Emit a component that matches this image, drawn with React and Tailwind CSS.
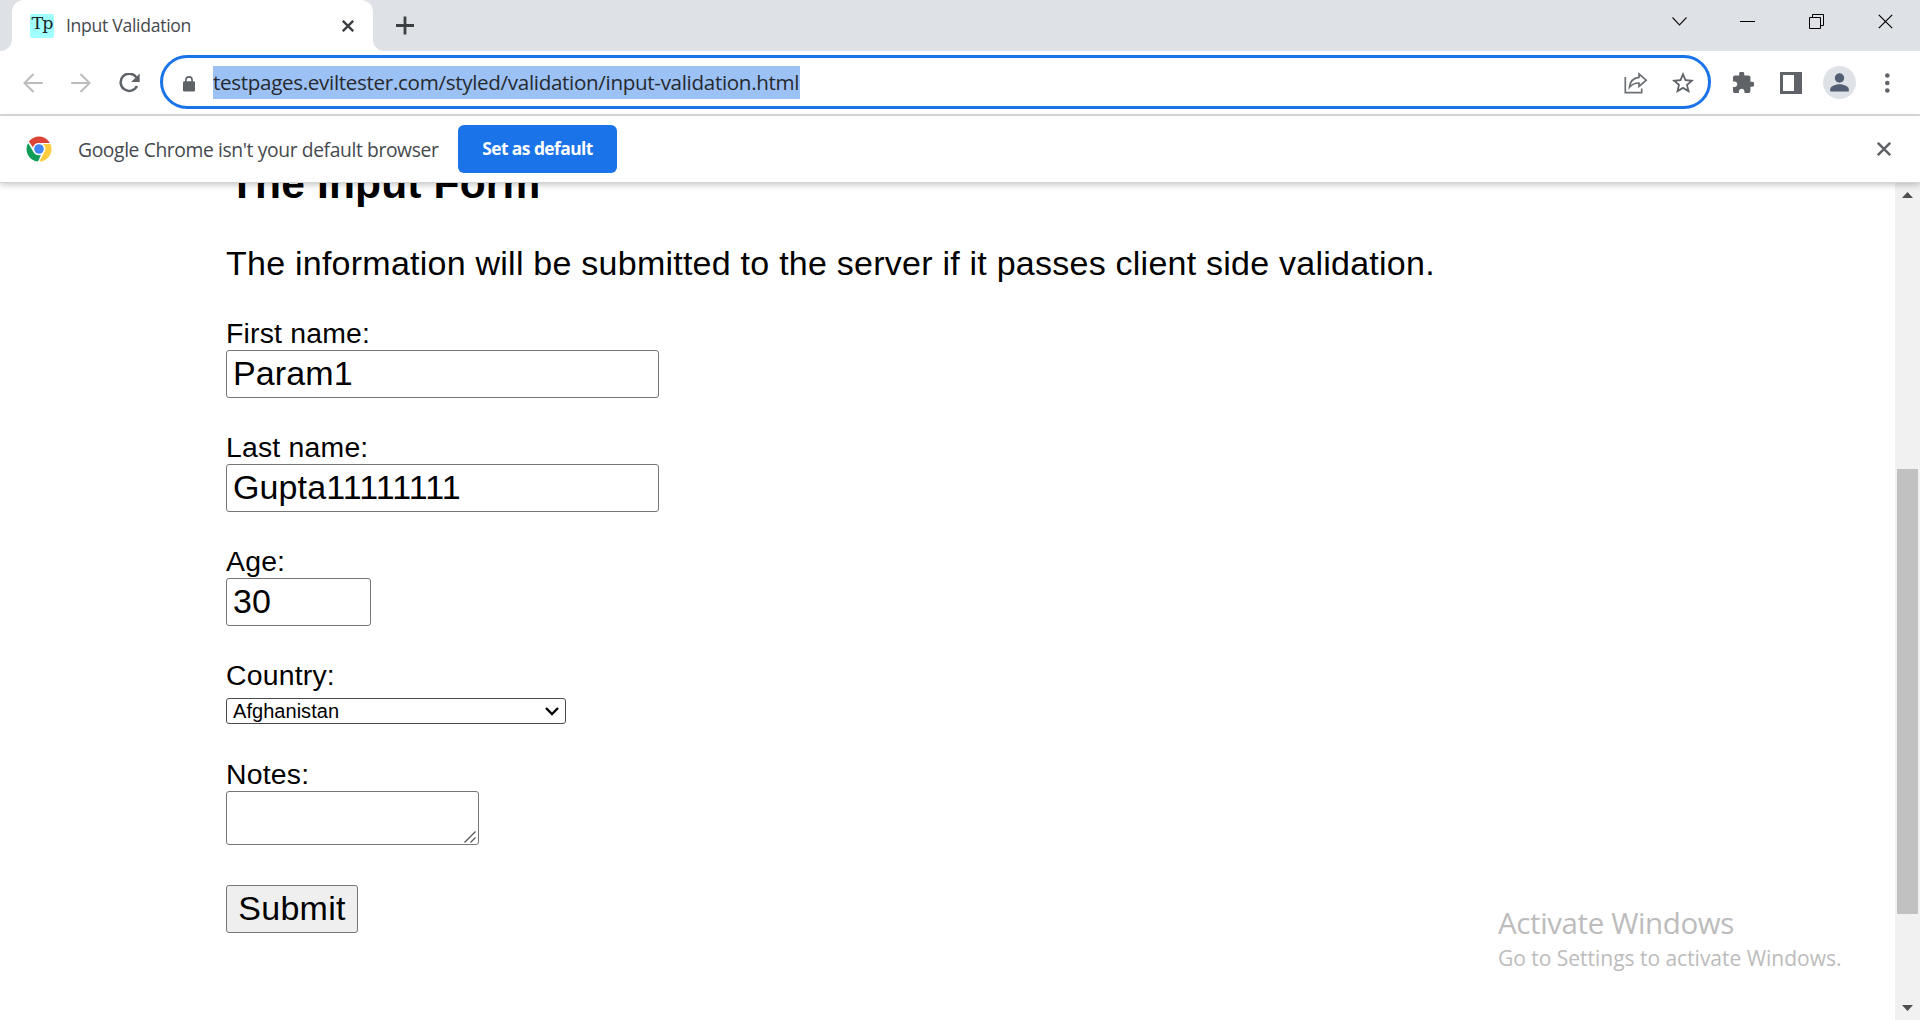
function Cross({ size, width, color }) {
  return (
    <svg width={size} height={size} viewBox={`0 0 ${size} ${size}`} fill="none" stroke={color} strokeWidth={width}>
      <path d={`M.8 .8 L${size - 0.8} ${size - 0.8} M${size - 0.8} .8 L.8 ${size - 0.8}`} />
    </svg>
  );
}

function TabStrip() {
  return (
    <header className="flex h-[51px] bg-[#dee1e6]">
      <div className="w-3 bg-white">
        <div className="h-full rounded-br-[12px] bg-[#dee1e6]" />
      </div>
      <div className="flex w-[361px] items-center rounded-t-[12px] bg-white pl-[18px] pr-[19px]">
        <div className="flex size-6 items-center justify-center rounded-[2px] bg-[#a0ffff] font-['DejaVu_Serif',serif] text-[17.5px] leading-[20px] tracking-[-1px] text-[#222]">
          <span className="-mt-[5px]">Tp</span>
        </div>
        <span className="-mt-[2px] ml-[12px] flex-1 whitespace-nowrap text-[17.6px] leading-[24px] tracking-[-0.3px] text-[#45494d]">Input Validation</span>
        <Cross size={12} width={2.4} color="#3c4043" />
      </div>
      <div className="w-[11px] bg-white">
        <div className="h-full rounded-bl-[11px] bg-[#dee1e6]" />
      </div>
      <svg className="ml-3 mt-4" width="18" height="19" viewBox="0 0 18 19" stroke="#3c4043" strokeWidth="2.8">
        <path d="M0 9.500h18M9 .5v18" />
      </svg>
      <div className="ml-auto flex pr-[27px] pt-[14px]">
        <svg className="mr-[53px] mt-[3px]" width="15" height="9" viewBox="0 0 15 9" fill="none" stroke="#111" strokeWidth="1.1">
          <path d="M.5 .5l7 7.5 7-7.5" />
        </svg>
        <div className="mr-[54px] mt-[7px] h-px w-[15px] bg-black" />
        <svg className="mr-[54px]" width="15" height="15" viewBox="0 0 15 15" fill="none" stroke="#000">
          <path d="M.5 3.5h11v11h-11zM3.5 3.5v-3h11v11h-3" />
        </svg>
        <Cross size={15} width={1.2} color="#000" />
      </div>
    </header>
  );
}

function Toolbar() {
  return (
    <div className="flex h-[65px] items-center border-b-2 border-[#dadcdc] bg-white">
      <svg className="ml-[23px]" width="20" height="20" viewBox="0 0 20 20" fill="none" stroke="#babcbe" strokeWidth="2.1">
        <path d="M19.8 10H1.5M10.5 1l-9 9 9 9" />
      </svg>
      <svg className="ml-7" width="20" height="20" viewBox="0 0 20 20" fill="none" stroke="#babcbe" strokeWidth="2.1">
        <path d="M.2 10h18.3M9.5 1l9 9-9 9" />
      </svg>
      <svg className="ml-7" width="21" height="20" viewBox="0 0 21 20" fill="none" stroke="#5f6368" strokeWidth="2.5">
        <path d="M17.2 4.2A8.6 8.6 0 1 0 18 13" />
        <path d="M20.7 .4v8.6h-8.6z" fill="#5f6368" stroke="none" />
      </svg>
      <div className="-mt-px ml-5 flex h-[54px] w-[1551px] items-center rounded-full border-[3px] border-[#1a73e8] pl-5 pr-[14px]">
        <svg width="12" height="16" viewBox="0 0 12 16" fill="none" className="mt-[3px]">
          <path d="M2.9 6V4a3.1 3.1 0 0 1 6.2 0v2" stroke="#5f6368" strokeWidth="1.6" />
          <rect y="5.3" width="12" height="10.2" rx="1.3" fill="#5f6368" />
        </svg>
        <div className="ml-[18px] mt-px h-[33px] w-[587px] whitespace-nowrap bg-[#9cc1f5] text-[20.6px] leading-[33px] tracking-[-0.32px] text-[#26292d]">testpages.eviltester.com/styled/validation/input-validation.html</div>
        <svg className="ml-auto mt-[2px]" width="24" height="22" viewBox="0 0 24 22" fill="none" stroke="#6c7074" strokeWidth="1.7">
          <path d="M1.3 5v15.6h16.4v-4.2" />
          <path d="M15 2l7.2 6.2L15 14.4V11C10 11 7.600 12.500 5.500 15.200 6 9.800 9.500 6 15 5.400z" />
        </svg>
        <svg className="ml-[24px] mt-px" width="22" height="21" viewBox="2 2 20 19" fill="#5f6368" preserveAspectRatio="none">
          <path d="M22 9.240l-7.190-.62L12 2 9.190 8.630 2 9.240l5.460 4.730L5.820 21 12 17.270 18.180 21l-1.630-7.030L22 9.240zM12 15.400l-3.760 2.270 1-4.280-3.320-2.880 4.380-.38L12 6.100l1.710 4.040 4.380.38-3.320 2.880 1 4.280L12 15.400z" />
        </svg>
      </div>
      <svg className="ml-[22px]" width="21" height="21" viewBox="2 1.500 20.500 20.500" fill="#5f6368">
        <path d="M20.500 11H19V7c0-1.100-.9-2-2-2h-4V3.500a2.500 2.500 0 0 0-5 0V5H4c-1.100 0-1.990.9-1.990 2v3.800H3.500c1.490 0 2.700 1.210 2.700 2.700s-1.210 2.700-2.700 2.700H2V20c0 1.100.9 2 2 2h3.800v-1.500c0-1.490 1.210-2.700 2.700-2.700s2.700 1.210 2.700 2.700V22H17c1.100 0 2-.9 2-2v-4h1.500a2.500 2.500 0 0 0 0-5z" />
      </svg>
      <svg className="ml-[26px] mt-px" width="22" height="22" viewBox="0 0 22 22">
        <path fill="#5f6368" fillRule="evenodd" d="M0 0h22v22H0zM3 3v16h11V3z" />
      </svg>
      <svg className="ml-[21px]" width="33" height="33" viewBox="0 0 33 33">
        <circle cx="16.500" cy="16.500" r="16.500" fill="#dee1e6" />
        <circle cx="16.500" cy="12" r="4.700" fill="#525e73" />
        <path fill="#525e73" d="M7.200 25.500v-2.300c0-3.300 6.200-4.900 9.300-4.900s9.300 1.600 9.300 4.900v2.300z" />
      </svg>
      <svg className="ml-[29px]" width="5" height="20" viewBox="0 0 5 20" fill="#5f6368">
        <circle cx="2.300" cy="2.500" r="2.300" />
        <circle cx="2.300" cy="10" r="2.300" />
        <circle cx="2.300" cy="17.500" r="2.300" />
      </svg>
    </div>
  );
}

function ChromeLogo() {
  return (
    <svg width="26" height="26" viewBox="0 0 26 26">
      <circle cx="13" cy="13" r="12.600" fill="#fff" />
      <path fill="#db4437" d="M2.900 5.500A12.600 12.600 0 0 1 23.900 6.900H13a6.100 6.100 0 0 0-6 4.700z" />
      <path fill="#ffcd40" d="M24.500 7.900A12.600 12.600 0 0 1 13.300 25.600L18.400 16a6.100 6.100 0 0 0-1.500-8.100z" />
      <path fill="#0f9d58" d="M2.100 6.900A12.600 12.600 0 0 0 12 25.600L15 19c-3 .8-6-.4-7.600-3z" />
      <circle cx="13" cy="13" r="5.900" fill="#fff" />
      <circle cx="13" cy="13" r="4.800" fill="#4285f4" />
    </svg>
  );
}

function InfoBar() {
  return (
    <div className="relative z-10 flex h-[67px] items-center border-b border-[#d3d5d5] bg-white pl-[26px] pr-[29px] shadow-[0_2px_6px_rgba(0,0,0,0.22)]">
      <ChromeLogo />
      <span className="ml-[26px] mt-[2px] w-[380px] whitespace-nowrap text-[19.300px] leading-[28px] tracking-[-0.390px] text-[#45494d]">Google Chrome isn't your default browser</span>
      <button className="h-12 w-[159px] whitespace-nowrap rounded-[6px] bg-[#1a73e8] pb-[2px] text-[17.400px] font-bold tracking-[-0.550px] text-white">Set as default</button>
      <div className="ml-auto">
        <Cross size={14} width={2.5} color="#5f6368" />
      </div>
    </div>
  );
}

const labelClass = "h-8 text-[28.400px] leading-[30px] tracking-[0.200px]";

function Field({ label, value, className }) {
  return (
    <div className="mb-[34px]">
      <div className={labelClass}>{label}</div>
      <div className={`h-12 rounded-[3px] border border-[#767676] pl-[6px] text-[34px] leading-[44px] tracking-[0.120px] ${className}`}>{value}</div>
    </div>
  );
}

function Page() {
  return (
    <main className="flex-1 overflow-hidden pl-[226px] font-['Liberation_Sans',Arial,sans-serif] text-black">
      <h2 className="-mt-[24px] h-12 whitespace-nowrap pl-[3px] text-[42.500px] font-bold leading-[50px] tracking-[0.150px]">The Input Form</h2>
      <p className="mt-[37px] h-10 whitespace-nowrap text-[34px] leading-[38px] tracking-[0.240px]">The information will be submitted to the server if it passes client side validation.</p>
      <form className="mt-[34px]">
        <Field label="First name:" value="Param1" className="w-[433px]" />
        <Field label="Last name:" value="Gupta11111111" className="w-[433px]" />
        <Field label="Age:" value="30" className="w-[145px]" />
        <div className={labelClass}>Country:</div>
        <div className="mt-[6px] flex h-[26px] w-[340px] items-center justify-between rounded-[3px] border border-[#4a4a4a] pl-[6px] pr-[6px] text-[20px] leading-6 tracking-[0.040px]">
          <span>Afghanistan</span>
          <svg width="14" height="9" viewBox="0 0 14 9" fill="none" stroke="#000" strokeWidth="2.400">
            <path d="M1 1l6 6 6-6" />
          </svg>
        </div>
        <div className={`mt-[35px] ${labelClass}`}>Notes:</div>
        <div className="flex h-[54px] w-[253px] items-end justify-end rounded-[3px] border border-[#767676] p-px pr-[2px]">
          <svg width="12" height="12" viewBox="0 0 12 12" stroke="#555" strokeWidth="1.300">
            <path d="M.5 11.500l11-11M6.500 11.500l5-5" />
          </svg>
        </div>
        <div className="mt-10 flex h-12 w-[132px] justify-center rounded-[3px] border border-[#767676] bg-[#efefef] text-[34px] leading-[44px] tracking-[0.250px]">Submit</div>
      </form>
    </main>
  );
}

function Scrollbar() {
  return (
    <div className="flex w-[25px] flex-col items-center bg-[#f1f1f1]">
      <svg className="mt-[9px]" width="11" height="6" viewBox="0 0 11 6" fill="#505050">
        <path d="M0 6L5.500 0 11 6z" />
      </svg>
      <div className="mt-[271px] h-[445px] w-[21px] bg-[#c1c1c1]" />
      <svg className="mt-[91px]" width="11" height="6" viewBox="0 0 11 6" fill="#505050">
        <path d="M0 0h11L5.500 6z" />
      </svg>
    </div>
  );
}

export default function App() {
  return (
    <div className="relative flex h-[1020px] w-[1920px] flex-col overflow-hidden bg-white font-['Open_Sans','Noto_Sans',sans-serif]">
      <TabStrip />
      <Toolbar />
      <InfoBar />
      <div className="flex min-h-0 flex-1">
        <Page />
        <Scrollbar />
      </div>
      <div className="absolute left-[1498px] top-[902px] whitespace-nowrap text-[#bcbcbc]">
        <div className="h-[41px] text-[29.500px] leading-[42px] tracking-[-0.380px]">Activate Windows</div>
        <div className="h-[30px] text-[21px] leading-[30px] tracking-[-0.020px]">Go to Settings to activate Windows.</div>
      </div>
    </div>
  );
}
